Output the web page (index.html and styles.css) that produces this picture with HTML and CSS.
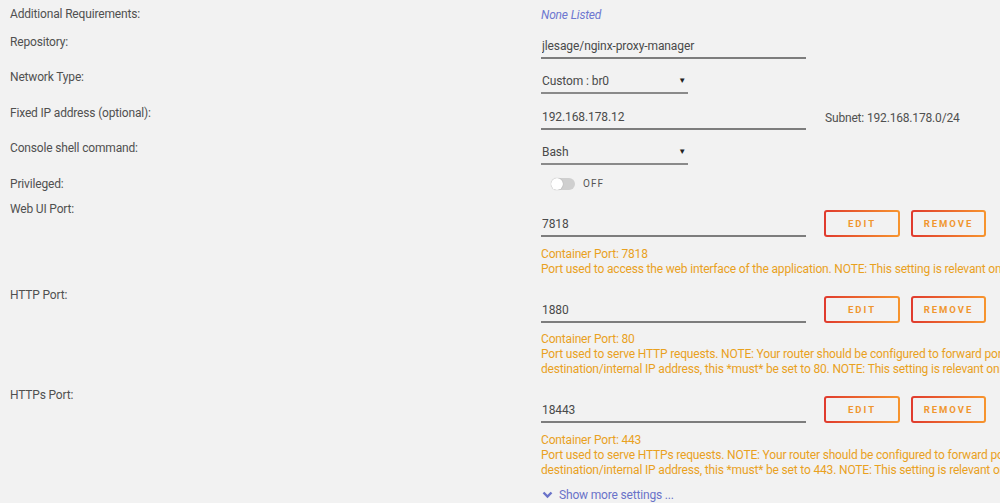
FILE: index.html
```html
<!DOCTYPE html>
<html lang="en">
<head>
    <meta charset="UTF-8">
    <meta name="viewport" content="width=device-width, initial-scale=1.0">
    <title>Update Container</title>

    <link rel="stylesheet" href="styles.css">
</head>

<body>
    <div class="form">
        <div class="row first">
            <div class="label">Additional Requirements:</div>
            <div class="value"><span class="none">None Listed</span></div>
        </div>
        <div class="row">
            <div class="label">Repository:</div>
            <div class="value"><input class="field wide" type="text" value="jlesage/nginx-proxy-manager" readonly></div>
        </div>
        <div class="row">
            <div class="label">Network Type:</div>
            <div class="value">
                <div class="select">Custom : br0<span class="caret">&#9660;</span></div>
            </div>
        </div>
        <div class="row">
            <div class="label">Fixed IP address (optional):</div>
            <div class="value inline">
                <input class="field wide" type="text" value="192.168.178.12" readonly>
                <span class="subnet">Subnet: 192.168.178.0/24</span>
            </div>
        </div>
        <div class="row">
            <div class="label">Console shell command:</div>
            <div class="value">
                <div class="select">Bash<span class="caret">&#9660;</span></div>
            </div>
        </div>
        <div class="row privileged">
            <div class="label">Privileged:</div>
            <div class="value inline">
                <span class="toggle"><span class="knob"></span></span>
                <span class="toggleText">OFF</span>
            </div>
        </div>

        <!-- ports -->
        <div class="row port">
            <div class="label">Web UI Port:</div>
            <div class="value">
                <div class="portLine">
                    <input class="field wide" type="text" value="7818" readonly>
                    <button type="button" class="btn edit">EDIT</button>
                    <button type="button" class="btn">REMOVE</button>
                </div>
                <div class="info">
                    Container Port: 7818<br>
                    Port used to access the web interface of the application. NOTE: This setting is relevant only when the network type is 'Bridge'.
                </div>
            </div>
        </div>
        <div class="row port">
            <div class="label">HTTP Port:</div>
            <div class="value">
                <div class="portLine">
                    <input class="field wide" type="text" value="1880" readonly>
                    <button type="button" class="btn edit">EDIT</button>
                    <button type="button" class="btn">REMOVE</button>
                </div>
                <div class="info">
                    Container Port: 80<br>
                    Port used to serve HTTP requests. NOTE: Your router should be configured to forward port 80 to this port. If your router doesn't allow to change the<br>
                    destination/internal IP address, this *must* be set to 80. NOTE: This setting is relevant only when the network type is 'Bridge'.
                </div>
            </div>
        </div>
        <div class="row port">
            <div class="label">HTTPs Port:</div>
            <div class="value">
                <div class="portLine">
                    <input class="field wide" type="text" value="18443" readonly>
                    <button type="button" class="btn edit">EDIT</button>
                    <button type="button" class="btn">REMOVE</button>
                </div>
                <div class="info">
                    Container Port: 443<br>
                    Port used to serve HTTPs requests. NOTE: Your router should be configured to forward port 443 to this port. If your router doesn't allow to change the<br>
                    destination/internal IP address, this *must* be set to 443. NOTE: This setting is relevant only when the network type is 'Bridge'.
                </div>
                <a href="#" class="more">
                    <svg width="11" height="8" viewBox="0 0 11 8"><polyline points="1.5,1.5 5.5,5.5 9.5,1.5" fill="none" stroke="#6a73c9" stroke-width="2.4"/></svg>
                    Show more settings ...
                </a>
            </div>
        </div>
    </div>
</body>

</html>
```

FILE: styles.css
```css
    * {
        margin: 0;
        padding: 0;
        box-sizing: border-box;
    }
    html, body {
        overflow: hidden;
    }
    body {
        background-color: #f2f2f2;
        font-family: Roboto, "Liberation Sans", sans-serif;
        font-size: 12px;
        letter-spacing: -0.17px;
        color: #505050;
        padding: 4px 0 0 10px;
    }
    .row {
        display: flex;
        align-items: flex-start;
        margin-bottom: 8.5px;
    }
    .row.first {
        margin-bottom: 6.5px;
    }
    .row.privileged {
        margin-bottom: 5.5px;
    }
    .row.port {
        margin-bottom: 8px;
    }
    .label {
        flex: 0 0 531px;
        line-height: 20px;
    }
    .value {
        line-height: 20px;
    }
    .value.inline {
        display: flex;
        align-items: center;
    }
    .none {
        font-style: italic;
        color: #6d77d0;
        display: inline-block;
        padding-top: 1px;
    }
    .field {
        display: block;
        height: 27px;
        padding: 3px 0 0 1px;
        border: none;
        border-bottom: 2px solid #7d7d7d;
        background: transparent;
        font-family: inherit;
        font-size: 12px;
        letter-spacing: -0.1px;
        color: #4a4a4a;
        outline: none;
    }
    .field.wide {
        width: 265px;
    }
    .select {
        position: relative;
        width: 147px;
        height: 27px;
        padding: 3px 0 0 1px;
        line-height: 22px;
        letter-spacing: -0.1px;
        border-bottom: 2px solid #8a8a8a;
        color: #4a4a4a;
    }
    .caret {
        position: absolute;
        right: 2px;
        top: 3px;
        font-size: 8px;
        color: #222;
    }
    .subnet {
        margin-left: 19px;
        padding-top: 3px;
    }
    .toggle {
        position: relative;
        display: inline-block;
        width: 24px;
        height: 12px;
        margin-left: 10px;
        border-radius: 6px;
        background-color: #cfcfcf;
    }
    .knob {
        position: absolute;
        left: 0;
        top: 0;
        width: 12px;
        height: 12px;
        border-radius: 50%;
        background-color: #fff;
        box-shadow: 0 0 1px rgba(0, 0, 0, 0.35);
    }
    .toggleText {
        margin-left: 8px;
        font-size: 10px;
        letter-spacing: 1px;
        color: #555;
    }
    .portLine {
        display: flex;
        align-items: flex-start;
        margin-top: 11px;
    }
    .btn {
        width: 76px;
        height: 27px;
        margin-left: 18px;
        border: 2px solid transparent;
        border-radius: 3px;
        background: linear-gradient(#f2f2f2, #f2f2f2) padding-box,
                    linear-gradient(90deg, #e03a2e, #f7952e) border-box;
        font-family: inherit;
        font-size: 9.5px;
        font-weight: bold;
        letter-spacing: 2px;
        color: #f0962f;
    }
    .btn + .btn {
        margin-left: 11px;
        width: 75px;
    }
    .info {
        margin-top: 9.5px;
        line-height: 15px;
        color: #e9a11e;
        white-space: nowrap;
    }
    .more {
        display: flex;
        align-items: center;
        margin-top: 10px;
        margin-left: 1px;
        line-height: 15px;
        color: #6a73c9;
        text-decoration: none;
    }
    .more svg {
        margin-right: 6px;
    }
```
